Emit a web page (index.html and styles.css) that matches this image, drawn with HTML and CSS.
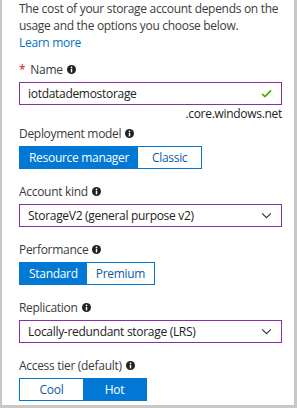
FILE: index.html
```html
<!DOCTYPE html>
<html lang="en">
<head>
  <meta charset="UTF-8"/>
  <title>Create storage account</title>
  <link rel="stylesheet" href="styles.css">
</head>
<body>
  <div class="panel">
    <p class="intro">The cost of your storage account depends on the usage and the options you choose below. <a href="#">Learn more</a></p>

    <div class="field first">
      <div class="label"><span class="req">*</span> Name <svg class="info" viewBox="0 0 10 10"><circle cx="5" cy="5" r="5" fill="#222"/><rect x="4.2" y="4.2" width="1.6" height="4" fill="#fff"/><circle cx="5" cy="2.6" r="0.95" fill="#fff"/></svg></div>
      <div class="box">
        <span>iotdatademostorage</span>
        <svg class="check" viewBox="0 0 12 10"><path d="M1 5.5 L4.3 8.5 L11 1.5" fill="none" stroke="#57a300" stroke-width="1.8"/></svg>
      </div>
      <div class="suffix">.core.windows.net</div>
    </div>

    <div class="field tight">
      <div class="label">Deployment model <svg class="info" viewBox="0 0 10 10"><circle cx="5" cy="5" r="5" fill="#222"/><rect x="4.2" y="4.2" width="1.6" height="4" fill="#fff"/><circle cx="5" cy="2.6" r="0.95" fill="#fff"/></svg></div>
      <div class="toggle">
        <span class="opt on">Resource manager</span>
        <span class="opt">Classic</span>
      </div>
    </div>

    <div class="field">
      <div class="label">Account kind <svg class="info" viewBox="0 0 10 10"><circle cx="5" cy="5" r="5" fill="#222"/><rect x="4.2" y="4.2" width="1.6" height="4" fill="#fff"/><circle cx="5" cy="2.6" r="0.95" fill="#fff"/></svg></div>
      <div class="box">
        <span>StorageV2 (general purpose v2)</span>
        <svg class="chev" viewBox="0 0 12 8"><path d="M1 1.5 L6 6.5 L11 1.5" fill="none" stroke="#333" stroke-width="1.2"/></svg>
      </div>
    </div>

    <div class="field">
      <div class="label">Performance <svg class="info" viewBox="0 0 10 10"><circle cx="5" cy="5" r="5" fill="#222"/><rect x="4.2" y="4.2" width="1.6" height="4" fill="#fff"/><circle cx="5" cy="2.6" r="0.95" fill="#fff"/></svg></div>
      <div class="toggle">
        <span class="opt on">Standard</span>
        <span class="opt">Premium</span>
      </div>
    </div>

    <div class="field">
      <div class="label">Replication <svg class="info" viewBox="0 0 10 10"><circle cx="5" cy="5" r="5" fill="#222"/><rect x="4.2" y="4.2" width="1.6" height="4" fill="#fff"/><circle cx="5" cy="2.6" r="0.95" fill="#fff"/></svg></div>
      <div class="box">
        <span>Locally-redundant storage (LRS)</span>
        <svg class="chev" viewBox="0 0 12 8"><path d="M1 1.5 L6 6.5 L11 1.5" fill="none" stroke="#333" stroke-width="1.2"/></svg>
      </div>
    </div>

    <div class="field">
      <div class="label">Access tier (default) <svg class="info" viewBox="0 0 10 10"><circle cx="5" cy="5" r="5" fill="#222"/><rect x="4.2" y="4.2" width="1.6" height="4" fill="#fff"/><circle cx="5" cy="2.6" r="0.95" fill="#fff"/></svg></div>
      <div class="toggle">
        <span class="opt">Cool</span>
        <span class="opt on">Hot</span>
      </div>
    </div>
  </div>
</body>
</html>
```

FILE: styles.css
```css
* {
  box-sizing: border-box;
  margin: 0;
  padding: 0;
}

body {
  font-family: "Open Sans", "Noto Sans", sans-serif;
  font-size: 12px;
  letter-spacing: -0.3px;
  color: #3b3b3b;
  background: #fff;
}

.panel {
  width: 297px;
  height: 408px;
  border-left: 2px solid #c8c8c8;
  border-right: 3px solid #c8c8c8;
  border-bottom: 3px solid #c8c8c8;
  padding: 0 12px 0 17px;
  overflow: hidden;
}

.intro {
  line-height: 17px;
}

.intro a {
  display: block;
  color: #0072c6;
  text-decoration: none;
}

.field {
  margin-top: 14px;
}

.field.first {
  margin-top: 10px;
}

.field.tight {
  margin-top: 3px;
}

.label {
  line-height: 17px;
  display: flex;
  align-items: center;
  gap: 4px;
  margin-bottom: 4px;
}

.req {
  color: #e00b1c;
  margin-right: 1px;
}

.info {
  width: 9px;
  height: 9px;
}

.box {
  height: 23px;
  border: 1px solid #8a2ea6;
  display: flex;
  align-items: center;
  justify-content: space-between;
  padding: 0 9px 0 8px;
  color: #222;
}

.check {
  width: 11px;
  height: 9px;
}

.chev {
  width: 11px;
  height: 7px;
}

.suffix {
  text-align: right;
  line-height: 17px;
  color: #222;
}

.toggle {
  display: inline-flex;
  border: 1px solid #0078d4;
  height: 23px;
}

.opt {
  min-width: 63px;
  padding: 0 9px;
  text-align: center;
  line-height: 21px;
  color: #0e5aa7;
}

.opt.on {
  background: #0078d4;
  color: #fff;
}
```
